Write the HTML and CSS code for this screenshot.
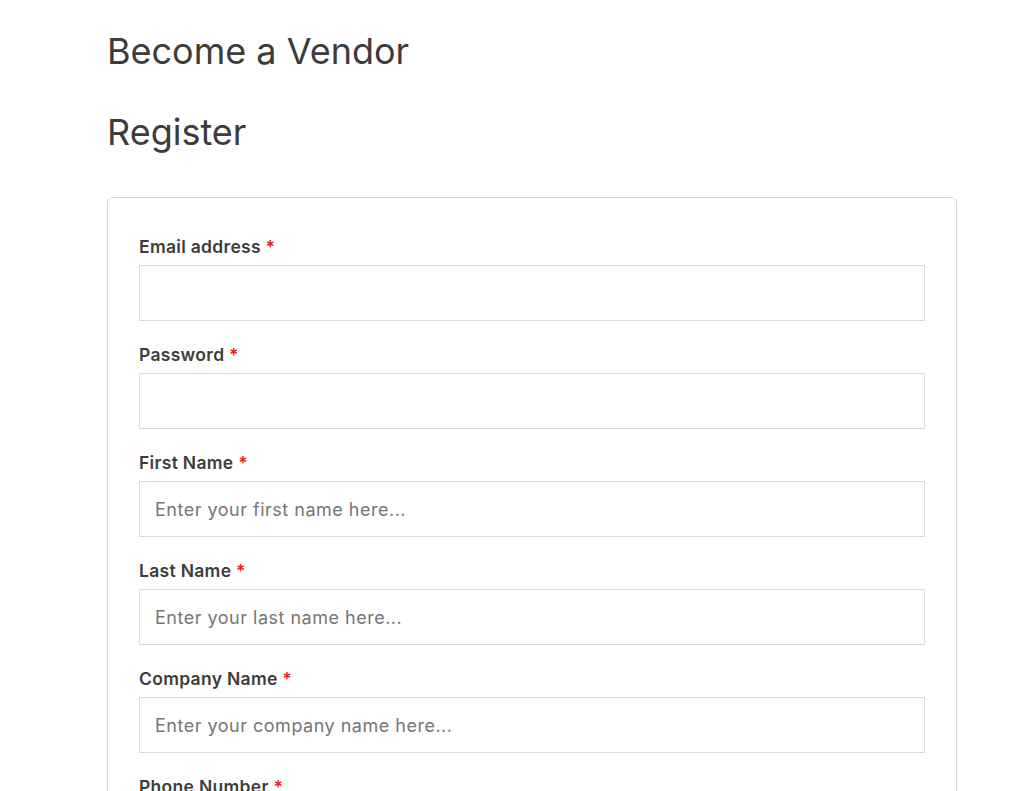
FILE: index.html
```html
<!DOCTYPE html>
<html>
<head>
  <meta charset="UTF-8">
  <meta name="viewport" content="width=device-width, initial-scale=1">
  <title>Become a Vendor</title>
  <link rel="stylesheet" href="styles.css">
</head>
<body>
<div class="page">
  <h1 class="page-title">Become a Vendor</h1>
  <h2 class="section-title">Register</h2>

  <form class="register-form" action="/register" method="POST">
    <div class="form-row">
      <label for="reg-email">Email address <span class="required">*</span></label>
      <input type="email" id="reg-email" name="email">
    </div>
    <div class="form-row">
      <label for="reg-password">Password <span class="required">*</span></label>
      <input type="password" id="reg-password" name="password">
    </div>
    <div class="form-row">
      <label for="first-name">First Name <span class="required">*</span></label>
      <input type="text" id="first-name" name="first_name" placeholder="Enter your first name here...">
    </div>
    <div class="form-row">
      <label for="last-name">Last Name <span class="required">*</span></label>
      <input type="text" id="last-name" name="last_name" placeholder="Enter your last name here...">
    </div>
    <div class="form-row">
      <label for="company-name">Company Name <span class="required">*</span></label>
      <input type="text" id="company-name" name="company_name" placeholder="Enter your company name here...">
    </div>
    <div class="form-row">
      <label for="phone">Phone Number <span class="required">*</span></label>
      <input type="tel" id="phone" name="phone" placeholder="Enter your phone number here...">
    </div>
  </form>
</div>
</body>
</html>
```

FILE: styles.css
```css
body {
  margin: 0;
  background: #fff;
  color: #3c3c3c;
  font-family: Inter, "Noto Sans", sans-serif;
}

.page {
  width: 850px;
  margin: 0 0 0 107px;
  padding-top: 30px;
}

.page-title,
.section-title {
  font-size: 36px;
  font-weight: 400;
  line-height: 1.2;
  margin: 0;
  color: #3c3c3c;
}

.section-title {
  margin-top: 38px;
}

.register-form {
  margin-top: 43px;
  border: 1px solid #d4d4d4;
  border-radius: 6px;
  padding: 37px 31px 20px;
}

.form-row {
  margin-bottom: 22px;
}

.form-row label {
  display: block;
  font-size: 17.5px;
  font-weight: 600;
  letter-spacing: 0.3px;
  line-height: 24px;
  margin-bottom: 6px;
  color: #3c3c3c;
}

.required {
  color: #e2231a;
}

.form-row input {
  display: block;
  box-sizing: border-box;
  width: 100%;
  height: 56px;
  padding: 0 15px;
  border: 1px solid #dcdcdc;
  border-radius: 0;
  font-family: inherit;
  font-size: 18px;
  letter-spacing: 0.5px;
  color: #3c3c3c;
  background: #fff;
}

.form-row input::placeholder {
  color: #767676;
}
```
